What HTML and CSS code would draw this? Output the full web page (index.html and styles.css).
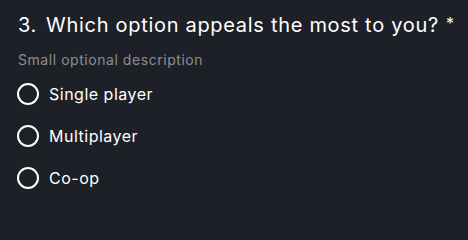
FILE: index.html
```html
<!DOCTYPE html>
<html>
<head>
<meta charset="utf-8">
<link rel="stylesheet" href="styles.css">
</head>
<body>
<div class="question">
  <h2 class="title"><span class="num">3.</span><span class="text">Which option appeals the most to you?</span><span class="req">*</span></h2>
  <p class="desc">Small optional description</p>
  <div class="options">
    <label class="option"><span class="radio"></span><span class="label">Single player</span></label>
    <label class="option"><span class="radio"></span><span class="label">Multiplayer</span></label>
    <label class="option"><span class="radio"></span><span class="label">Co-op</span></label>
  </div>
</div>
</body>
</html>
```

FILE: styles.css
```css
html, body {
  margin: 0;
  padding: 0;
  background: #1e2027;
  width: 468px;
  height: 204px;
  overflow: hidden;
}
.question {
  padding: 12px 0 0 18px;
  font-family: Inter, "Noto Sans", sans-serif;
  color: #ffffff;
}
.title {
  margin: 0;
  font-size: 20px;
  font-weight: 400;
  line-height: 26px;
  letter-spacing: 0.7px;
  display: flex;
  align-items: baseline;
  white-space: nowrap;
}
.num {
  margin-right: 9px;
  flex: none;
}
.text {
  flex: none;
}
.req {
  flex: none;
  margin-left: 7px;
  font-size: 16px;
  position: relative;
  top: -3px;
}
.desc {
  margin: 12px 0 0 0;
  font-size: 14px;
  line-height: 18px;
  letter-spacing: 0.55px;
  color: #8a8d94;
}
.options {
  margin-top: 14px;
  display: flex;
  flex-direction: column;
  gap: 20px;
}
.option {
  display: flex;
  align-items: center;
  gap: 10px;
  height: 22px;
}
.radio {
  width: 18px;
  height: 18px;
  border: 2px solid #ffffff;
  border-radius: 50%;
  flex: none;
  margin-left: -1px;
}
.label {
  font-size: 16px;
  line-height: 22px;
  letter-spacing: 0.5px;
}
```
